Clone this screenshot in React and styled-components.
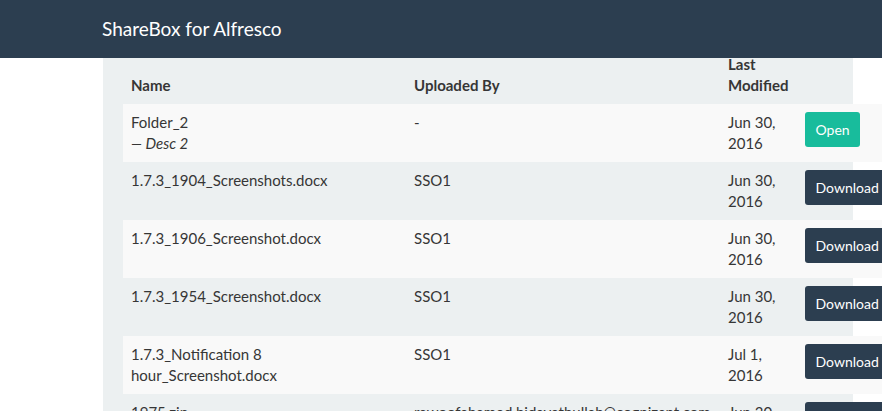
import React from "react";
import styled, { createGlobalStyle } from "styled-components";

const Global = createGlobalStyle`
  html, body { margin: 0; padding: 0; background: #fff; overflow: hidden; }
  body { font-family: Lato, "Open Sans", sans-serif; font-size: 15px; line-height: 21px; color: #363636; }
`;

const Page = styled.div`
  width: 882px;
  height: 411px;
  overflow: hidden;
`;

const NavBar = styled.header`
  position: relative;
  z-index: 2;
  height: 58px;
  background: #2c3e50;
  display: flex;
  align-items: center;
  padding-left: 102px;
`;

const Brand = styled.div`
  color: #fff;
  font-size: 19px;
  font-weight: 400;
  margin-top: -2px;
`;

const Well = styled.main`
  position: relative;
  z-index: 1;
  margin-top: -12px;
  margin-left: 103px;
  width: 750px;
  background: #ecf0f1;
  padding: 0 20px;
  box-sizing: border-box;
  min-height: 400px;
`;

const Table = styled.table`
  border-collapse: collapse;
  width: 772px;
  table-layout: fixed;
`;

const Th = styled.th`
  text-align: left;
  vertical-align: bottom;
  font-weight: 700;
  padding: 8px;
  width: ${(p) => p.$w}px;
`;

const Row = styled.tr`
  background: ${(p) => (p.$odd ? "#f9f9f9" : "transparent")};
`;

const Td = styled.td`
  padding: 8px;
  vertical-align: top;
  height: 42px;
`;

const Desc = styled.em`
  display: block;
  font-style: italic;
`;

const Button = styled.button`
  font-family: inherit;
  font-size: 14px;
  line-height: 20px;
  color: #fff;
  border: none;
  border-radius: 3px;
  height: 35px;
  padding: 0 10.5px;
  background: ${(p) => (p.$variant === "success" ? "#18bc9c" : "#2c3e50")};
  white-space: nowrap;
  cursor: pointer;
`;

const rows = [
  { name: "Folder_2", desc: "— Desc 2", by: "-", date: ["Jun 30,", "2016"], action: "Open" },
  { name: "1.7.3_1904_Screenshots.docx", by: "SSO1", date: ["Jun 30,", "2016"], action: "Download" },
  { name: "1.7.3_1906_Screenshot.docx", by: "SSO1", date: ["Jun 30,", "2016"], action: "Download" },
  { name: "1.7.3_1954_Screenshot.docx", by: "SSO1", date: ["Jun 30,", "2016"], action: "Download" },
  { name: "1.7.3_Notification 8 hour_Screenshot.docx", by: "SSO1", date: ["Jul 1,", "2016"], action: "Download" },
  { name: "1975.zip", by: "rawoofahamed.hidayathullah@cognizant.com", date: ["Jun 30,", "2016"], action: "Download" },
];

export default function App() {
  return (
    <Page>
      <Global />
      <NavBar>
        <Brand>ShareBox for Alfresco</Brand>
      </NavBar>
      <Well>
        <Table>
          <thead>
            <tr>
              <Th $w={267}>Name</Th>
              <Th $w={298}>Uploaded By</Th>
              <Th $w={61}>Last Modified</Th>
              <Th $w={82}></Th>
            </tr>
          </thead>
          <tbody>
            {rows.map((r, i) => (
              <Row key={i} $odd={i % 2 === 0}>
                <Td>
                  {r.name}
                  {r.desc && <Desc>{r.desc}</Desc>}
                </Td>
                <Td>{r.by}</Td>
                <Td>
                  {r.date[0]}
                  <br />
                  {r.date[1]}
                </Td>
                <Td>
                  <Button $variant={r.action === "Open" ? "success" : "primary"}>{r.action}</Button>
                </Td>
              </Row>
            ))}
          </tbody>
        </Table>
      </Well>
    </Page>
  );
}
